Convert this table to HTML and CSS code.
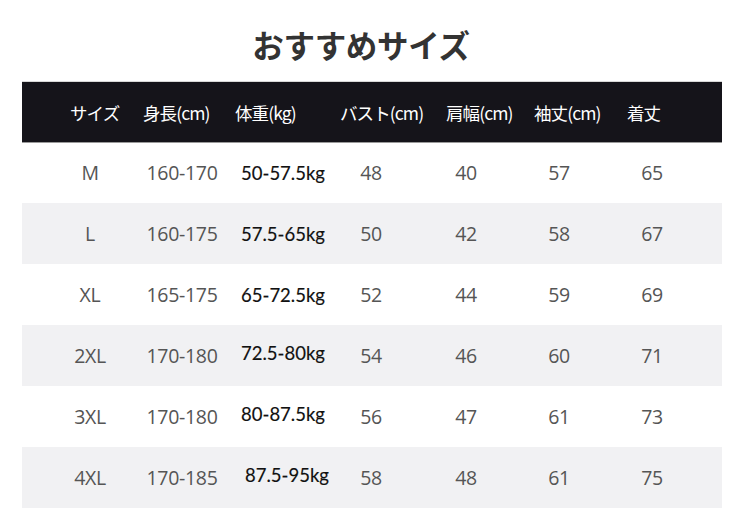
FILE: index.html
```html
<!DOCTYPE html>
<html lang="ja">
<head>
<meta charset="utf-8">
<link rel="stylesheet" href="styles.css">
</head>
<body>
<div class="page">
  <h1 class="title">おすすめサイズ</h1>
  <div class="table">
    <div class="head">
      <span>サイズ</span><span>身長(cm)</span><span>体重(kg)</span><span>バスト(cm)</span><span>肩幅(cm)</span><span>袖丈(cm)</span><span>着丈</span>
    </div>
    <div class="row"><span>M</span><span>160-170</span><span class="kg">50-57.5kg</span><span>48</span><span>40</span><span>57</span><span>65</span></div>
    <div class="row alt"><span>L</span><span>160-175</span><span class="kg">57.5-65kg</span><span>50</span><span>42</span><span>58</span><span>67</span></div>
    <div class="row"><span>XL</span><span>165-175</span><span class="kg">65-72.5kg</span><span>52</span><span>44</span><span>59</span><span>69</span></div>
    <div class="row alt"><span>2XL</span><span>170-180</span><span class="kg up">72.5-80kg</span><span>54</span><span>46</span><span>60</span><span>71</span></div>
    <div class="row"><span>3XL</span><span>170-180</span><span class="kg up">80-87.5kg</span><span>56</span><span>47</span><span>61</span><span>73</span></div>
    <div class="row alt"><span>4XL</span><span>170-185</span><span class="kg up shift">87.5-95kg</span><span>58</span><span>48</span><span>61</span><span>75</span></div>
  </div>
</div>
</body>
</html>
```
FILE: styles.css
```css
html, body {
  margin: 0;
  padding: 0;
  background: #ffffff;
}
.page {
  width: 750px;
  height: 518px;
  box-sizing: border-box;
}
.title {
  margin: 0;
  height: 82px;
  box-sizing: border-box;
  padding-top: 22px;
  padding-right: 28px;
  text-align: center;
  font-family: "Noto Sans CJK JP", "Noto Sans", sans-serif;
  font-weight: 700;
  font-size: 31.5px;
  line-height: 44px;
  color: #333333;
  letter-spacing: -0.3px;
}
.table {
  margin-left: 22px;
  width: 700px;
}
.head {
  height: 60px;
  background: #15141a;
  box-shadow: 0 1px 0 #9a9a9a, 0 -1px 0 #d8d8d8;
  display: grid;
  grid-template-columns: 73px 92px 105px 106px 88px 93px 1fr;
  padding-left: 48px;
  align-items: center;
  color: #ffffff;
  font-family: "Noto Sans CJK JP", "Noto Sans", sans-serif;
  font-size: 17.5px;
  letter-spacing: -0.9px;
  white-space: nowrap;
}
.row {
  height: 61px;
  display: grid;
  grid-template-columns: 100px 84px 118px 58px 132px 54px 132px;
  padding-left: 18px;
  align-items: center;
  text-align: center;
  font-family: "Open Sans", "Noto Sans", sans-serif;
  font-size: 19.5px;
  color: #555555;
  white-space: nowrap;
  letter-spacing: -0.3px;
}
.row.alt {
  background: #f1f1f3;
}
.row .kg {
  font-family: Lato, "Liberation Sans", sans-serif;
  font-size: 18.5px;
  font-weight: 400;
  color: #111111;
  -webkit-text-stroke: 0.15px #111111;
  letter-spacing: 0;
}
.row .kg.up {
  margin-top: -6px;
}
.row .kg.shift {
  padding-left: 8px;
}
```
